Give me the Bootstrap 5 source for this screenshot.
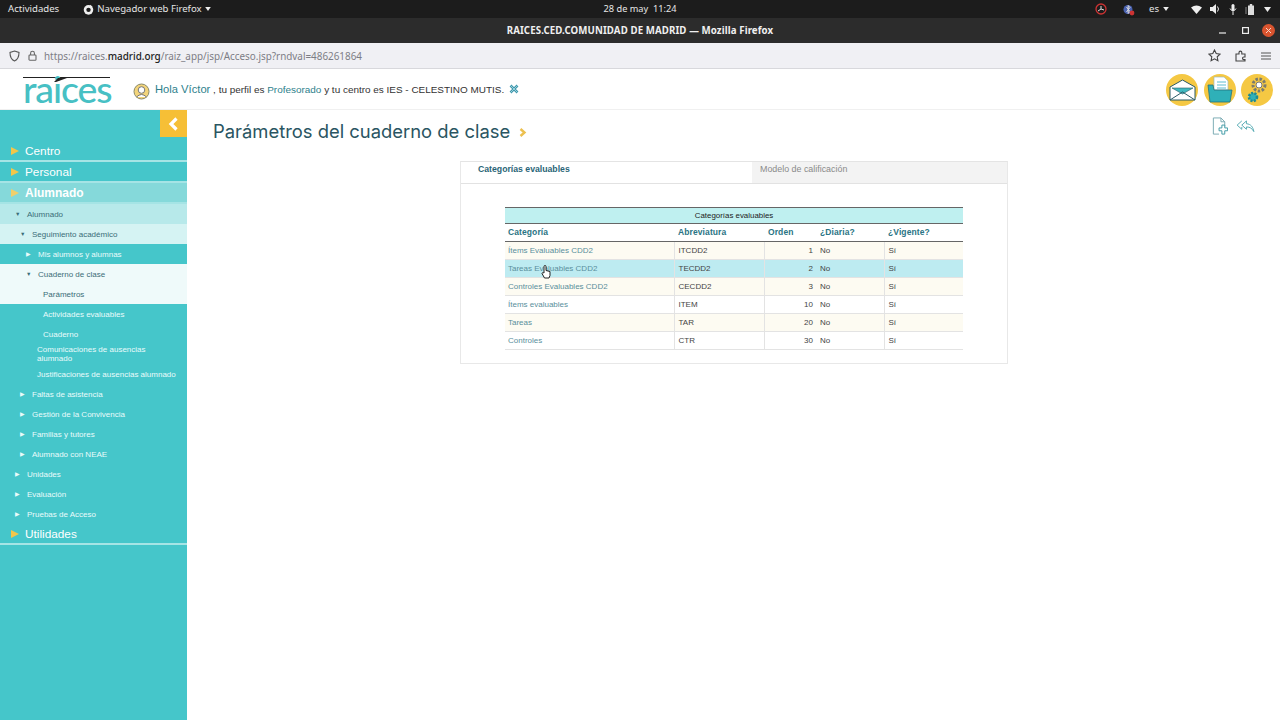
<!DOCTYPE html>
<html lang="es"><head><meta charset="utf-8"><title>RAICES</title>
<link href="https://cdn.jsdelivr.net/npm/bootstrap@5.3.0/dist/css/bootstrap.min.css" rel="stylesheet">
<style>
html,body{height:720px;overflow:hidden}
body{font-family:"Liberation Sans",Arial,sans-serif;background:#fff;width:1280px;position:relative}
.os-bar{height:18px;background:#1c1c1c;color:#e6e6e6;font:9.6px/18px "Noto Sans",sans-serif;padding:0 8px}
.os-clock{position:absolute;left:0;right:0;text-align:center;pointer-events:none;font-size:9.2px}
.os-menu{margin-left:24px}
.title-bar{height:25px;background:#2c2c2c;color:#f0f0f0;font:700 9.7px/25px "Noto Sans",sans-serif;position:relative;text-align:center;letter-spacing:.1px}
.win-btns{position:absolute;right:5px;top:0;height:25px}
.win-close{width:13px;height:13px;border-radius:50%;background:#d9542f}
.url-bar{height:26px;background:#f0f0f4;border-bottom:1px solid #d8d8dc;padding:0 9px;color:#7d7d85;font:9.9px "Noto Sans",sans-serif}
.url-bar b{font-weight:500;color:#222}
.app-head{height:41px;border-bottom:1px solid #f0f0f0;padding:0 7px 0 23px}
.logo-box{width:87px;position:relative;border-top:1px solid #222;margin-top:2px;height:27px;color:#47c0c4;font:500 37.5px/22px "Lato",sans-serif;letter-spacing:-1.1px;text-align:left;overflow:visible;white-space:nowrap}
.logo-tick{position:absolute;left:30px;top:-1px}
.hello{margin-left:23px;font-size:9.95px;color:#333;white-space:nowrap}
.hello .hi{font-size:11.2px;color:#2e7f8c}
.hello .prof{color:#2e7f8c}
.avatar{margin-top:5px;margin-right:5px}
.x-ic{margin-left:5px}
.round-ic{width:32px;height:32px;border-radius:50%;background:#f5c843;margin-left:5.5px;margin-top:1px}
.shell{height:610px}
.side{width:187px;flex:none;background:#45c6ca;color:#fff}
.toggle-row{height:31px}
.toggle-box{width:27px;height:27px;background:#f6bf36}
.lvl1{height:21px;font-size:11.8px;line-height:20px;padding-left:11px;border-bottom:2px solid #a5e4e5;display:flex;align-items:center}
.lvl1 .tri{width:0;height:0;border-left:8px solid #f3c649;border-top:4.5px solid transparent;border-bottom:4.5px solid transparent;margin-right:6px}
.lvl1.open{background:#85d9da;font-weight:700;font-size:12px;color:#fff}
.lvl1.open .tri{border-left-color:#f1cf6b}
.sub{height:20px;font-size:8px;line-height:21px;white-space:nowrap;color:#e9fbfb}
.sub .arr{display:inline-block;width:12px;font-size:5.5px;vertical-align:1px}
.p1{padding-left:15px}.p2{padding-left:20px}.p3{padding-left:26px}.p4{padding-left:43px}.p5{padding-left:37px}
.bg-a{background:#b7e9ea;color:#3b6d78}
.bg-b{background:#d5f3f3;color:#3b6d78}
.bg-c{background:#effafa;color:#3b6d78}
.sub.two{height:20px;line-height:9px;white-space:normal;padding-top:1px;padding-right:30px}
.page{flex:1;min-width:0;position:relative}
.page-title{font:400 18.4px/22px "Inter",sans-serif;color:#2a5562;padding:10px 0 0 26px;height:51px;display:flex;align-items:flex-start}
.page-title svg{margin-left:9px;margin-top:8px}
.tools{position:absolute;right:25px;top:7px}
.panel{width:548px;height:203px;margin-left:273px;border:1px solid #e8e8e8;border-top-color:#e4e4e4}
.tab-row{height:22px;border-bottom:1px solid #e2e2e2;font-size:8.7px;line-height:15px}
.tab-on{width:291px;padding-left:17px;font-weight:700;color:#2a6577}
.tab-off{flex:1;background:#f3f3f3;color:#8a8a8a;padding-left:8px;font-size:8.9px}
.grid-wrap{padding:23px 44px 0 44px}
.cat-table{width:458px;margin:0;font-size:8px;table-layout:fixed;border-collapse:collapse}
.cat-table th,.cat-table td{padding:0 3px 0 4px;height:18px;line-height:17px;background:transparent;border:0;vertical-align:middle;box-shadow:none}
.cat-table th:first-child,.cat-table td:first-child{padding-left:3px}
.cat-table .cap th{background:#bff0f0;height:16px;text-align:center;font-weight:400;color:#222;border-top:1px solid #666;border-bottom:1px solid #666;font-size:7.9px;line-height:14px}
.cat-table .hd th{color:#2a7484;font-weight:700;border-bottom:1px solid #666;font-size:8.5px;letter-spacing:.1px}
.cat-table tbody td{border-bottom:1px solid #e3e3e3;color:#444}
.cat-table tbody td+td{border-left:1px solid #e3e3e3}
.cat-table tbody td.no-l{border-left:0}
.cat-table tbody td:first-child{color:#5a8f9c}
.cat-table tbody tr.odd td{background:#fdfbf2}
.cat-table tbody tr.hov td{background:#bdebf1}
.hand{position:absolute;left:354px;top:155px}
</style></head><body>
<div class="os-bar d-flex align-items-center position-relative">
  <div class="os-clock">28 de may&nbsp;&nbsp;11:24</div>
  <span>Actividades</span>
  <span class="os-menu d-flex align-items-center" style="gap:3px">
    <svg width="11" height="11" viewBox="0 0 12 12"><circle cx="6" cy="6.400" r="5.200" fill="#eee"/><circle cx="6" cy="6.400" r="2.400" fill="#1c1c1c"/><path d="M8 .8 7.400 3.600 10.500 3Z" fill="#eee"/></svg>
    Navegador web Firefox
    <svg width="6" height="4" viewBox="0 0 7 5"><path d="M0 0h7L3.500 5Z" fill="#eee"/></svg>
  </span>
  <span class="ms-auto d-flex align-items-center">
    <svg width="12" height="12" viewBox="0 0 12 12" class="me-3"><circle cx="6" cy="6" r="5" fill="none" stroke="#c33" stroke-width="1.300"/><path d="M6 6 3 8M6 6V3M6 6l3 1" stroke="#ddd" fill="none"/></svg>
    <svg width="12" height="13" viewBox="0 0 12 13" style="margin-right:14px"><circle cx="5" cy="6.500" r="4.500" fill="#4a62b0"/><path d="M3.500 4 7 8.500 5.200 10.500V2.500L7 4.500 3.500 9" stroke="#ddd" fill="none"/><circle cx="9" cy="10" r="2.400" fill="#c33"/></svg>
    <span class="d-flex align-items-center gap-1" style="margin-right:22px">es <svg width="6" height="4" viewBox="0 0 7 5"><path d="M0 0h7L3.500 5Z" fill="#eee"/></svg></span>
    <svg width="11" height="9" viewBox="0 0 11 9" class="me-2"><path d="M0 2.500Q5.500-1.500 11 2.500L5.500 9Z" fill="#eee"/></svg>
    <svg width="11" height="10" viewBox="0 0 11 10" class="me-2"><path d="M0 3h2.500L6 0v10L2.500 7H0Z" fill="#eee"/><path d="M7.500 2.500Q9.500 5 7.500 7.500" stroke="#eee" fill="none"/></svg>
    <svg width="8" height="11" viewBox="0 0 8 11" class="me-2"><rect x="2.500" y="0" width="3" height="7" rx="1.500" fill="#eee"/><path d="M1 4.500q3 5 6 0M4 7.500V11" stroke="#eee" fill="none"/></svg>
    <svg width="11" height="11" viewBox="0 0 11 11" class="me-2"><rect x="3" y="1.500" width="6" height="9.500" fill="#ddd"/><rect x="4.800" y="0" width="2.400" height="2" fill="#ddd"/><path d="M1 3v7" stroke="#888"/></svg>
    <svg width="7" height="5" viewBox="0 0 7 5" style="margin-right:1px"><path d="M0 0h7L3.500 5Z" fill="#eee"/></svg>
  </span>
</div>
<div class="title-bar">RAICES.CED.COMUNIDAD DE MADRID — Mozilla Firefox
  <div class="win-btns d-flex align-items-center">
    <svg width="7" height="2" viewBox="0 0 7 2" style="margin-right:16px;margin-top:4px"><path d="M0 1h7" stroke="#eee" stroke-width="1.200"/></svg>
    <svg width="7" height="7" viewBox="0 0 7 7" style="margin-right:13px"><rect x=".6" y=".6" width="5.800" height="5.800" fill="none" stroke="#eee" stroke-width="1.200"/></svg>
    <span class="win-close d-flex align-items-center justify-content-center"><svg width="7" height="7" viewBox="0 0 7 7"><path d="M1 1l5 5M6 1 1 6" stroke="#f6d8cc" stroke-width="1"/></svg></span>
  </div>
</div>
<div class="url-bar d-flex align-items-center">
  <svg width="11" height="12" viewBox="0 0 11 12" class="me-2"><path d="M5.500 1 10 2.400c0 4.600-1.500 7.200-4.500 8.600C2.500 9.600 1 7 1 2.400Z" fill="none" stroke="#555" stroke-width="1.100"/></svg>
  <svg width="9" height="11" viewBox="0 0 9 11" style="margin-right:7px"><rect x="1" y="5" width="7" height="5.200" rx=".8" fill="none" stroke="#666" stroke-width="1.100"/><path d="M2.600 5V3.200a1.900 1.900 0 0 1 3.800 0V5" fill="none" stroke="#666" stroke-width="1.100"/></svg>
  <span>https://raices.<b>madrid.org</b>/raiz_app/jsp/Acceso.jsp?rndval=486261864</span>
  <span class="ms-auto d-flex align-items-center">
    <svg width="13" height="13" viewBox="0 0 13 13" style="margin-right:14px"><path d="M6.500 1l1.700 3.600 3.800.5-2.800 2.700.7 3.900-3.400-1.900-3.400 1.900.7-3.900L1 5.100l3.800-.5Z" fill="none" stroke="#444" stroke-width="1.100"/></svg>
    <svg width="12" height="12" viewBox="0 0 12 12" style="margin-right:14px"><path d="M1 4h3V2.500a1.400 1.400 0 0 1 2.800 0V4H10v3h-1.200a1.300 1.300 0 0 0 0 2.600H10V11H1Z" fill="none" stroke="#444" stroke-width="1.100"/></svg>
    <svg width="10" height="8" viewBox="0 0 10 8"><path d="M0 1h10M0 4h10M0 7h10" stroke="#555" stroke-width="1.100"/></svg>
  </span>
</div>
<header class="app-head d-flex align-items-center">
  <div class="logo-box">raices<svg class="logo-tick" width="14" height="5" viewBox="0 0 14 5"><path d="M1 5 5 1h9L3 5Z" fill="#222"/></svg></div>
  <div class="hello d-flex align-items-center">
    <svg class="avatar" width="17" height="17" viewBox="0 0 17 17"><circle cx="8.500" cy="8.500" r="7.500" fill="#f3d47a" stroke="#8a8a6a"/><circle cx="8.500" cy="7" r="3.300" fill="#fff" stroke="#777"/><path d="M3.500 14q5-5 10 0" fill="#fff" stroke="#777"/></svg>
    <span><span class="hi">Hola Víctor</span> , tu perfil es <span class="prof">Profesorado</span> y tu centro es IES - CELESTINO MUTIS.</span>
    <svg width="10" height="10" viewBox="0 0 10 10" class="x-ic"><path d="M1.500 1.500l7 7M8.500 1.500l-7 7" stroke="#3f98ad" stroke-width="2.600"/><path d="M1.500 1.500l7 7M8.500 1.500l-7 7" stroke="#bfe6ee" stroke-width=".7"/></svg>
  </div>
  <div class="ms-auto d-flex align-items-center">
    <span class="round-ic d-flex align-items-center justify-content-center"><svg width="27" height="22" viewBox="0 0 27 22"><path d="M1 8 13.500 1 26 8v13H1Z" fill="#fff" stroke="#2a5a66"/><path d="M3 9h21l-10.500 6Z" fill="#3fb9c0" stroke="#2a5a66" stroke-width=".6"/><path d="M1 21l12.500-8L26 21" fill="none" stroke="#2a5a66"/></svg></span>
    <span class="round-ic d-flex align-items-center justify-content-center"><svg width="26" height="27" viewBox="0 0 26 27"><path d="M7 14V1h10l4 4v9Z" fill="#fff" stroke="#9bbcc2" stroke-width=".7"/><path d="M10 6h9M10 9h9M10 12h9" stroke="#5cbcd0"/><path d="M1 9h5l1 5h18l-2 12H3Z" fill="#2fb0b8" stroke="#25727c" stroke-width=".8"/></svg></span>
    <span class="round-ic d-flex align-items-center justify-content-center"><svg width="26" height="28" viewBox="0 0 26 28"><circle cx="15" cy="9" r="6" fill="#f5c843" stroke="#7c7c6e" stroke-width="3" stroke-dasharray="2.500 1.500"/><circle cx="15" cy="9" r="3" fill="#fff" stroke="#777"/><circle cx="9" cy="21" r="4" fill="#2fb0b8" stroke="#1f8a92" stroke-width="2.600" stroke-dasharray="2 1.300"/></svg></span>
  </div>
</header>
<div class="shell d-flex">
  <nav class="side">
    <div class="toggle-row d-flex justify-content-end"><div class="toggle-box d-flex align-items-center justify-content-center"><svg width="11" height="14" viewBox="0 0 11 14"><path d="M8.500 1.500 3 7l5.500 5.500" fill="none" stroke="#fff" stroke-width="3.200"/></svg></div></div>
    <div class="lvl1"><span class="tri"></span>Centro</div>
    <div class="lvl1"><span class="tri"></span>Personal</div>
    <div class="lvl1 open"><span class="tri"></span>Alumnado</div>
    <div class="sub p1 bg-a"><span class="arr">▼</span>Alumnado</div>
    <div class="sub p2 bg-b"><span class="arr">▼</span>Seguimiento académico</div>
    <div class="sub p3"><span class="arr">▶</span>Mis alumnos y alumnas</div>
    <div class="sub p3 bg-c"><span class="arr">▼</span>Cuaderno de clase</div>
    <div class="sub p4 bg-c">Parámetros</div>
    <div class="sub p4">Actividades evaluables</div>
    <div class="sub p4">Cuaderno</div>
    <div class="sub two p5">Comunicaciones de ausencias alumnado</div>
    <div class="sub p5">Justificaciones de ausencias alumnado</div>
    <div class="sub p2"><span class="arr">▶</span>Faltas de asistencia</div>
    <div class="sub p2"><span class="arr">▶</span>Gestión de la Convivencia</div>
    <div class="sub p2"><span class="arr">▶</span>Familias y tutores</div>
    <div class="sub p2"><span class="arr">▶</span>Alumnado con NEAE</div>
    <div class="sub p1"><span class="arr">▶</span>Unidades</div>
    <div class="sub p1"><span class="arr">▶</span>Evaluación</div>
    <div class="sub p1"><span class="arr">▶</span>Pruebas de Acceso</div>
    <div class="lvl1"><span class="tri"></span>Utilidades</div>
  </nav>
  <main class="page">
    <div class="page-title">Parámetros del cuaderno de clase <svg width="8" height="9" viewBox="0 0 8 9"><path d="M1.500 1 5.500 4.500 1.500 8" fill="none" stroke="#ecc050" stroke-width="2.400"/></svg></div>
    <div class="tools d-flex align-items-center gap-2">
      <svg width="16" height="19" viewBox="0 0 16 20"><path d="M1 1h8l4 4v5M9 1v4h4M1 1v17h6" fill="none" stroke="#78aab2"/><path d="M10 8.500v3H7v3h3v3.500h3v-3.500h3v-3h-3v-3Z" fill="#fff" stroke="#3e9aa5"/></svg>
      <svg width="19" height="13" viewBox="0 0 20 14"><path d="M6 1 1 5.500 6 10V7.500M11 1 6 5.500l5 4.500V7.500c4 0 6 1.500 8 5-1-5-3-8-8-8.500Z" fill="#fff" stroke="#4fa7b0"/></svg>
    </div>
    <section class="panel">
      <div class="tab-row d-flex">
        <div class="tab-on">Categorías evaluables</div>
        <div class="tab-off">Modelo de calificación</div>
      </div>
      <div class="grid-wrap">
        <table class="table cat-table">
          <colgroup><col style="width:169px"><col style="width:90px"><col style="width:52px"><col style="width:68px"><col style="width:79px"></colgroup>
          <thead>
            <tr class="cap"><th colspan="5">Categorías evaluables</th></tr>
            <tr class="hd"><th>Categoría</th><th>Abreviatura</th><th>Orden</th><th>¿Diaria?</th><th>¿Vigente?</th></tr>
          </thead>
          <tbody>
            <tr class="odd"><td>Ítems Evaluables CDD2</td><td>ITCDD2</td><td class="text-end">1</td><td class="no-l">No</td><td>Sí</td></tr>
            <tr class="hov"><td>Tareas Evaluables CDD2</td><td>TECDD2</td><td class="text-end">2</td><td class="no-l">No</td><td>Sí</td></tr>
            <tr class="odd"><td>Controles Evaluables CDD2</td><td>CECDD2</td><td class="text-end">3</td><td class="no-l">No</td><td>Sí</td></tr>
            <tr><td>Ítems evaluables</td><td>ITEM</td><td class="text-end">10</td><td class="no-l">No</td><td>Sí</td></tr>
            <tr class="odd"><td>Tareas</td><td>TAR</td><td class="text-end">20</td><td class="no-l">No</td><td>Sí</td></tr>
            <tr><td>Controles</td><td>CTR</td><td class="text-end">30</td><td class="no-l">No</td><td>Sí</td></tr>
          </tbody>
        </table>
      </div>
    </section>
    <svg class="hand" width="11" height="14" viewBox="0 0 11 14"><path d="M3 7V1.500a1 1 0 0 1 2 0V5.500l4 1v4L8 13H3.500L1 8.500c0-1 1-1 2-.5Z" fill="#fff" stroke="#222"/></svg>
  </main>
</div>
</body></html>
